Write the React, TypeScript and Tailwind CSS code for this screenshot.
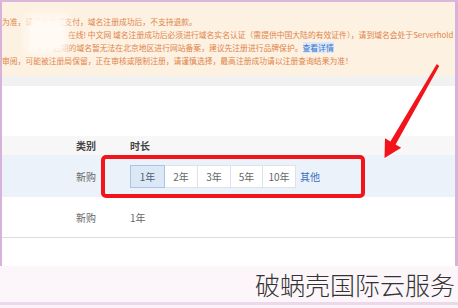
const years = ['1年', '2年', '3年', '5年', '10年'];
const widths = ['w-[35px]', 'w-[34px]', 'w-[34px]', 'w-[33px]', 'w-[34px]'];

function YearPicker() {
  return (
    <div className="flex items-center">
      <div className="flex h-[23px]">
        {years.map((y, i) => (
          <div
            key={y}
            className={
              widths[i] +
              ' flex items-center justify-center border text-[10px] -ml-px first:ml-0 ' +
              (i === 0
                ? 'relative z-10 bg-[#dce8f5] border-[#a9c4e4] text-[#4a5f78]'
                : 'bg-white border-[#dde3ea] text-[#666]')
            }
          >
            {y}
          </div>
        ))}
      </div>
      <span className="ml-[4px] text-[10px] text-[#3b6fc4]">其他</span>
    </div>
  );
}

export default function App() {
  return (
    <div className="relative w-[458px] h-[308px] overflow-hidden bg-[#fbf3f9] font-['Noto_Sans_CJK_SC','Noto_Sans',sans-serif]">
      <div className="h-[2px] bg-[#dcb7dc]" />
      <div className="h-[264px] border-l-2 border-r-[3px] border-[#d8b2d8] bg-white flex flex-col">
        {/* notice */}
        <div className="relative h-[74px] bg-[#fdf1e2] pt-[13px] text-[7.8px] leading-[13px] text-[#e0844a] whitespace-nowrap overflow-hidden">
          <div>为准，请尽快完成支付，域名注册成功后，不支持退款。</div>
          <div className="pl-[66px]">在线! 中文网 域名注册成功后必须进行域名实名认证（需提供中国大陆的有效证件），请到域名会处于Serverhold</div>
          <div className="pl-[51px]">
            后期的域名暂无法在北京地区进行网站备案，建议先注册进行品牌保护。
            <span className="bg-[#dce8f8] text-[#3b74c9]">查看详情</span>
          </div>
          <div>审阅，可能被注册局保留，正在审核或限制注册，请谨慎选择，最高注册成功请以注册查询结果为准！</div>
          <div className="absolute left-[24px] top-[12px] w-[42px] h-[40px] bg-[#fffaf4] blur-[4px]" />
        </div>
        <div className="h-[10px] bg-[#f1f1f1]" />
        <div className="h-[50px]" />
        {/* table */}
        <div className="h-[19px] bg-[#f7f7f7] flex items-center text-[10px] font-semibold text-[#444]">
          <span className="w-[128px] pl-[74px]">类别</span>
          <span>时长</span>
        </div>
        <div className="h-[42px] bg-[#ebf2fa] flex items-center text-[10px] text-[#666]">
          <span className="w-[128px] pl-[74px]">新购</span>
          <YearPicker />
        </div>
        <div className="h-[41px] flex items-center text-[10px] text-[#666] border-b border-[#dcdcdc]">
          <span className="w-[128px] pl-[74px]">新购</span>
          <span>1年</span>
        </div>
      </div>
      {/* watermark strip */}
      <div className="h-[39px] flex items-center justify-end pr-[3px] border-b-[3px] border-[#ecd8ea] bg-[#fcf6fa]">
        <span className="text-[25px] leading-none text-[#333] font-light">破蜗壳国际云服务</span>
      </div>
      {/* annotations */}
      <div className="absolute left-[101px] top-[155px] w-[264px] h-[43px] border-4 border-[#f2131b] rounded-[5px]" />
      <svg className="absolute left-0 top-0" width="458" height="308" viewBox="0 0 458 308">
        <polygon
          fill="#f2131b"
          points="436.8,64 439.2,66 395.6,144.4 401.2,147.8 384.5,158 385,138.2 390.4,141.6"
        />
      </svg>
    </div>
  );
}
